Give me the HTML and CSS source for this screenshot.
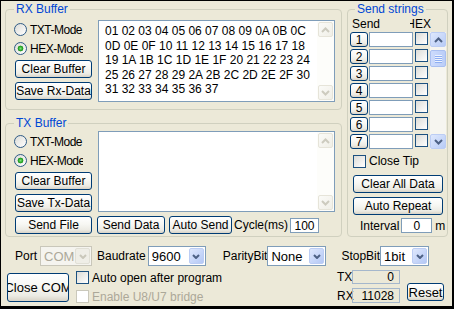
FILE: index.html
```html
<!DOCTYPE html>
<html lang="en">
<head>
    <meta charset="UTF-8">
    <title>Serial Port Debugger</title>
    <link rel="stylesheet" href="styles.css">
</head>
<body>
    <div class="window">
        <div class="top">
            <div class="left-col">
                <!-- Receive buffer -->
                <fieldset class="group rx-group">
                    <legend>RX Buffer</legend>
                    <div class="buffer">
                        <div class="modes">
                            <label class="radio"><span class="radio-box"></span>TXT-Mode</label>
                            <label class="radio"><span class="radio-box checked"></span>HEX-Mode</label>
                            <button class="btn mode-btn">Clear Buffer</button>
                            <button class="btn mode-btn">Save Rx-Data</button>
                        </div>
                        <div class="textbox rx-box">
                            <div class="text-area">01 02 03 04 05 06 07 08 09 0A 0B 0C 0D 0E 0F 10 11 12 13 14 15 16 17 18 19 1A 1B 1C 1D 1E 1F 20 21 22 23 24 25 26 27 28 29 2A 2B 2C 2D 2E 2F 30 31 32 33 34 35 36 37</div>
                            <div class="vscroll off">
                                <span class="sb-btn"><svg width="9" height="6" viewBox="0 0 9 6"><path d="M1 5L4.5 1.5 8 5" fill="none" stroke="#cdcbbf" stroke-width="2"/></svg></span>
                                <span class="sb-track"></span>
                                <span class="sb-btn"><svg width="9" height="6" viewBox="0 0 9 6"><path d="M1 1L4.5 4.5 8 1" fill="none" stroke="#cdcbbf" stroke-width="2"/></svg></span>
                            </div>
                        </div>
                    </div>
                </fieldset>

                <!-- Transmit buffer -->
                <fieldset class="group tx-group">
                    <legend>TX Buffer</legend>
                    <div class="buffer">
                        <div class="modes">
                            <label class="radio"><span class="radio-box"></span>TXT-Mode</label>
                            <label class="radio"><span class="radio-box checked"></span>HEX-Mode</label>
                            <button class="btn mode-btn">Clear Buffer</button>
                            <button class="btn mode-btn">Save Tx-Data</button>
                        </div>
                        <div class="textbox tx-box">
                            <div class="text-area"></div>
                            <div class="vscroll off">
                                <span class="sb-btn"><svg width="9" height="6" viewBox="0 0 9 6"><path d="M1 5L4.5 1.5 8 5" fill="none" stroke="#cdcbbf" stroke-width="2"/></svg></span>
                                <span class="sb-track"></span>
                                <span class="sb-btn"><svg width="9" height="6" viewBox="0 0 9 6"><path d="M1 1L4.5 4.5 8 1" fill="none" stroke="#cdcbbf" stroke-width="2"/></svg></span>
                            </div>
                        </div>
                    </div>
                    <div class="tx-actions">
                        <button class="btn send-file">Send File</button>
                        <button class="btn send-data">Send Data</button>
                        <button class="btn auto-send">Auto Send</button>
                        <span class="cycle-label">Cycle(ms)</span>
                        <span class="field cycle-field">100</span>
                    </div>
                </fieldset>
            </div>

            <!-- Preset strings -->
            <fieldset class="group send-group">
                <legend>Send strings</legend>
                <div class="send-body">
                    <div class="send-head">
                        <span class="send-title">Send</span>
                        <span class="hex-head">HEX</span>
                    </div>
                    <div class="send-list">
                        <div class="send-rows">
                            <div class="string-row"><button class="btn num-btn">1</button><span class="field str-field"></span><span class="check"></span></div>
                            <div class="string-row"><button class="btn num-btn">2</button><span class="field str-field"></span><span class="check"></span></div>
                            <div class="string-row"><button class="btn num-btn">3</button><span class="field str-field"></span><span class="check"></span></div>
                            <div class="string-row"><button class="btn num-btn">4</button><span class="field str-field"></span><span class="check"></span></div>
                            <div class="string-row"><button class="btn num-btn">5</button><span class="field str-field"></span><span class="check"></span></div>
                            <div class="string-row"><button class="btn num-btn">6</button><span class="field str-field"></span><span class="check"></span></div>
                            <div class="string-row"><button class="btn num-btn">7</button><span class="field str-field"></span><span class="check"></span></div>
                        </div>
                        <div class="vscroll on">
                            <span class="sb-btn"><svg width="9" height="6" viewBox="0 0 9 6"><path d="M1 5L4.5 1.5 8 5" fill="none" stroke="#4d6185" stroke-width="2"/></svg></span>
                            <span class="sb-thumb"><span class="grip"></span></span>
                            <span class="sb-track"></span>
                            <span class="sb-btn"><svg width="9" height="6" viewBox="0 0 9 6"><path d="M1 1L4.5 4.5 8 1" fill="none" stroke="#4d6185" stroke-width="2"/></svg></span>
                        </div>
                    </div>
                    <label class="check-row tip-row"><span class="check"></span>Close Tip</label>
                    <button class="btn wide-btn clear-all">Clear All Data</button>
                    <button class="btn wide-btn repeat">Auto Repeat</button>
                    <div class="interval-row">
                        <span>Interval</span>
                        <span class="field interval-field">0</span>
                        <span class="unit">m</span>
                    </div>
                </div>
            </fieldset>
        </div>

        <!-- Port settings -->
        <div class="port-row">
            <span class="port-label">Port</span>
            <div class="combo port-combo disabled">
                <span class="combo-text">COM3</span>
                <span class="combo-btn"><svg width="8" height="5" viewBox="0 0 8 5"><path d="M1 1l3 3 3-3" fill="none" stroke="#c9c7ba" stroke-width="2"/></svg></span>
            </div>
            <span class="baud-label">Baudrate</span>
            <div class="combo baud-combo">
                <span class="combo-text">9600</span>
                <span class="combo-btn"><svg width="8" height="5" viewBox="0 0 8 5"><path d="M1 1l3 3 3-3" fill="none" stroke="#4d6185" stroke-width="2"/></svg></span>
            </div>
            <span class="parity-label">ParityBit</span>
            <div class="combo parity-combo">
                <span class="combo-text">None</span>
                <span class="combo-btn"><svg width="8" height="5" viewBox="0 0 8 5"><path d="M1 1l3 3 3-3" fill="none" stroke="#4d6185" stroke-width="2"/></svg></span>
            </div>
            <span class="stop-label">StopBit</span>
            <div class="combo stop-combo">
                <span class="combo-text">1bit</span>
                <span class="combo-btn"><svg width="8" height="5" viewBox="0 0 8 5"><path d="M1 1l3 3 3-3" fill="none" stroke="#4d6185" stroke-width="2"/></svg></span>
            </div>
        </div>

        <div class="status-row">
            <button class="btn close-com">Close COM</button>
            <div class="options">
                <label class="check-row"><span class="check"></span>Auto open after program</label>
                <label class="check-row disabled"><span class="check"></span>Enable U8/U7 bridge</label>
            </div>
            <div class="counters">
                <div class="counter"><span class="counter-label">TX</span><span class="counter-value tx-value">0</span></div>
                <div class="counter"><span class="counter-label">RX</span><span class="counter-value rx-value">11028</span></div>
            </div>
            <button class="btn reset-btn">Reset</button>
        </div>
    </div>
</body>
</html>
```

FILE: styles.css
```css
/* Windows XP style colours */
:root {
    --color-face: #ece9d8;
    --color-group: #d0d0bf;
    --color-title: #0046d5;
    --color-btn-border: #003c74;
    --color-field: #7f9db9;
    --color-disabled: #aca899;
}

* {
    margin: 0;
    padding: 0;
    box-sizing: border-box;
}

body {
    font-family: 'Liberation Sans', Arial, sans-serif;
    font-size: 12px;
    color: #000;
    background: var(--color-face);
}

.window {
    width: 454px;
    height: 309px;
    background: var(--color-face);
    border: 1px solid #000;
    border-right-width: 2px;
    border-bottom-width: 3px;
    padding: 1px 4px 0 4px;
    overflow: hidden;
}

/* Top area: buffers on the left, strings on the right */
.top {
    display: flex;
    gap: 5px;
}

.left-col {
    width: 337px;
    display: flex;
    flex-direction: column;
    gap: 6px;
}

.group {
    border: 1px solid var(--color-group);
    border-radius: 4px;
    min-width: 0;
}

.group legend {
    color: var(--color-title);
    line-height: 14px;
    padding: 0 2px;
}

.rx-group { padding: 4px 6px 7px 8px; }
.tx-group { padding: 1px 6px 2px 8px; }

/* Generic controls */
.btn {
    font: inherit;
    color: #000;
    height: 18px;
    border: 1px solid var(--color-btn-border);
    border-radius: 3px;
    background: linear-gradient(to bottom, #ffffff 0%, #f7f7f3 45%, #ecebe4 80%, #d8d3c7 100%);
    display: flex;
    align-items: center;
    justify-content: center;
    white-space: nowrap;
    overflow: hidden;
    flex-shrink: 0;
}

.field {
    display: block;
    background: #fff;
    border: 1px solid var(--color-field);
    flex-shrink: 0;
}

.check {
    width: 13px;
    height: 13px;
    border: 1px solid #1c5180;
    background: linear-gradient(135deg, #dcdcd7, #ffffff);
    flex-shrink: 0;
}

.check-row {
    display: flex;
    align-items: center;
    gap: 3px;
    height: 15px;
    white-space: nowrap;
}

.check-row.disabled { color: var(--color-disabled); }
.check-row.disabled .check {
    border-color: #cac8bb;
    background: #fff;
}

.radio {
    display: flex;
    align-items: center;
    gap: 3px;
    height: 15px;
    width: 69px;
    letter-spacing: -0.5px;
    white-space: nowrap;
    overflow: hidden;
}

.radio-box {
    width: 13px;
    height: 13px;
    border-radius: 50%;
    border: 1px solid #2f5b86;
    background: linear-gradient(135deg, #dcdcd7, #ffffff);
    flex-shrink: 0;
}

.radio-box.checked {
    background: radial-gradient(circle at 50% 50%, #7ee37a 0, #29a829 2px, #1e8f1e 2.6px, transparent 3.2px),
                linear-gradient(135deg, #dcdcd7, #ffffff);
}

/* Buffers */
.buffer {
    display: flex;
    gap: 6px;
}

.modes {
    width: 78px;
    display: flex;
    flex-direction: column;
    gap: 4px;
    padding-top: 2px;
}

.tx-group .modes { padding-top: 3px; }

.mode-btn {
    width: 77px;
    margin-left: 1px;
}

.textbox {
    width: 237px;
    display: flex;
    border: 1px solid var(--color-field);
    background: #fff;
}

.rx-box { height: 82px; }
.tx-box { height: 81px; }

.text-area {
    flex: 1;
    padding: 3px 0 0 6px;
    line-height: 14.5px;
}

/* Scrollbars */
.vscroll {
    width: 17px;
    display: flex;
    flex-direction: column;
    flex-shrink: 0;
}

.vscroll .sb-btn {
    height: 17px;
    display: flex;
    align-items: center;
    justify-content: center;
    border-radius: 2px;
}

.vscroll .sb-track { flex: 1; }

.vscroll.off { background: #fdfdfa; }
.vscroll.off .sb-btn {
    margin: 1px;
    height: 15px;
    border: 1px solid #e6e4d9;
    background: linear-gradient(135deg, #fbfbf8, #f0efe7);
}

.vscroll.on {
    width: 16px;
    background: #f6f5f0;
}

.vscroll.on .sb-btn {
    height: 15px;
    border: 1px solid #bccdf4;
    background: linear-gradient(135deg, #dfe8fd, #b7cbf6);
}

.sb-thumb {
    height: 17px;
    margin-top: 3px;
    border: 1px solid #a9bff0;
    border-radius: 2px;
    background: linear-gradient(to right, #cddbfc, #bacdf8);
    display: flex;
    align-items: center;
    justify-content: center;
}

.grip {
    width: 7px;
    height: 8px;
    background: repeating-linear-gradient(to bottom, #eef3fe 0 1px, #8eaef2 1px 2px);
}

/* TX action row */
.tx-actions {
    display: flex;
    align-items: center;
    height: 18px;
    margin-top: 4px;
}

.send-file { width: 77px; margin-left: 1px; }
.send-data { width: 68px; margin-left: 5px; }
.auto-send { width: 63px; margin-left: 4px; }
.cycle-label { margin-left: 2px; }

.cycle-field {
    width: 29px;
    height: 15px;
    margin-left: 2px;
    text-align: center;
    line-height: 14px;
}

/* Send strings */
.send-group {
    width: 101px;
    padding: 1px 0 3px 2px;
}

.send-group legend { margin-left: 5px; }

.send-body {
    display: flex;
    flex-direction: column;
    align-items: flex-start;
}

.send-head {
    display: flex;
    height: 14px;
    line-height: 14px;
}

.send-title { margin-left: 2px; }

.hex-head {
    width: 21px;
    margin-left: 30px;
    overflow: hidden;
    white-space: nowrap;
    direction: rtl;
}

.send-list {
    display: flex;
    gap: 2px;
    margin-top: 1px;
    height: 117px;
}

.send-rows {
    display: flex;
    flex-direction: column;
    gap: 2px;
}

.string-row {
    display: flex;
    height: 15px;
}

.num-btn {
    width: 18px;
    height: 15px;
}

.str-field {
    width: 44px;
    height: 15px;
    margin-left: 1px;
}

.string-row .check { margin-left: 2px; }

.tip-row {
    margin-top: 5px;
    margin-left: 3px;
    height: 14px;
}

.wide-btn {
    width: 90px;
    margin-left: 3px;
}

.clear-all { margin-top: 7px; }
.repeat { margin-top: 4px; }

.interval-row {
    display: flex;
    align-items: center;
    height: 15px;
    margin-top: 3px;
    margin-left: 10px;
}

.interval-field {
    width: 31px;
    height: 15px;
    margin-left: 2px;
    text-align: center;
    line-height: 14px;
}

.unit { margin-left: 3px; }

/* Port settings */
.port-row {
    display: flex;
    align-items: center;
    height: 20px;
    margin-top: 9px;
}

.combo {
    display: flex;
    height: 20px;
    border: 1px solid var(--color-field);
    background: #fff;
    flex-shrink: 0;
}

.combo-text {
    flex: 1;
    min-width: 0;
    padding: 1px 0 0 3px;
    font-size: 13px;
    line-height: 17px;
    overflow: hidden;
    white-space: nowrap;
}

.combo-btn {
    width: 15px;
    margin: 1px;
    border: 1px solid #bccdf4;
    border-radius: 2px;
    background: linear-gradient(135deg, #dfe8fd, #b4c8f5);
    display: flex;
    align-items: center;
    justify-content: center;
    flex-shrink: 0;
}

.combo.disabled {
    border-color: #c9c7ba;
    background: #f5f4ef;
}

.combo.disabled .combo-text { color: var(--color-disabled); }

.combo.disabled .combo-btn {
    border-color: #e1e0d6;
    background: #efeee7;
}

.port-label { margin-left: 10px; }
.port-combo { width: 52px; margin-left: 3px; }
.baud-label { margin-left: 5px; }
.baud-combo { width: 58px; margin-left: 2px; }
.parity-label { margin-left: 17px; }
.parity-combo { width: 59px; }
.stop-label { margin-left: 15px; }
.stop-combo { width: 49px; }

/* Status row */
.status-row {
    display: flex;
    align-items: flex-start;
    margin-top: 4px;
}

.close-com {
    width: 62px;
    height: 29px;
    margin-top: 3px;
    margin-left: 2px;
    font-size: 13px;
}

.options {
    display: flex;
    flex-direction: column;
    gap: 4px;
    margin-left: 7px;
}

.counters {
    display: flex;
    flex-direction: column;
    gap: 4px;
    margin-left: auto;
}

.counter {
    display: flex;
    align-items: center;
}

.counter-label { width: 15px; }

.counter-value {
    width: 48px;
    border: 1px solid #a5b7cc;
    text-align: right;
    padding-right: 5px;
}

.tx-value { height: 14px; line-height: 13px; }
.rx-value { height: 15px; line-height: 15px; }

.reset-btn {
    width: 37px;
    margin: 13px 4px 0 7px;
    font-size: 13px;
}
```
